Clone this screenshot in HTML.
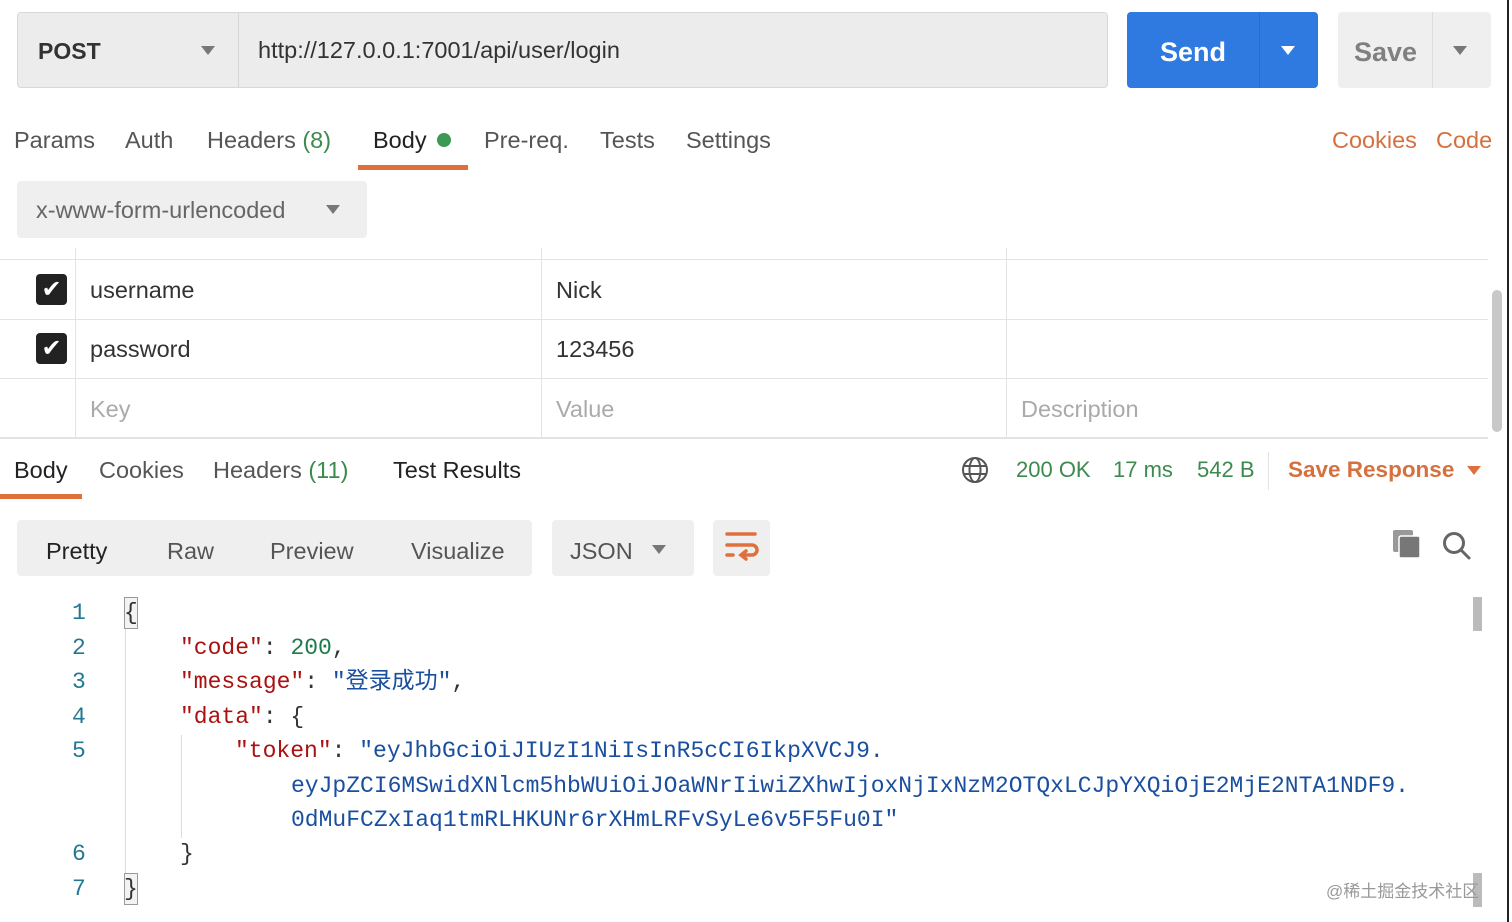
<!DOCTYPE html>
<html><head><meta charset="utf-8"><style>
*{margin:0;padding:0;box-sizing:border-box}
body{width:1512px;height:922px;background:#fff;position:relative;overflow:hidden;font-family:"Liberation Sans","Noto Sans CJK SC",sans-serif;color:#333}
.a{position:absolute;white-space:nowrap}
.t{font-size:23.5px;color:#555;line-height:28px}
.mono{font-family:"Liberation Mono","Noto Sans CJK SC",monospace;font-size:23px;line-height:28px;height:28px;position:absolute;white-space:pre}
.mono span{line-height:28px}
.k{color:#a11}.s{color:#1a4fa0}.n{color:#1f7a4a}
.ln{color:#237893;font-family:"Liberation Mono",monospace;font-size:23px;line-height:28px;position:absolute}
.tri{position:absolute;width:0;height:0;border-left:7px solid transparent;border-right:7px solid transparent;border-top:9px solid #777}
</style></head><body>
<div class="a" style="left:17px;top:12px;width:1091px;height:76px;background:#ececec;border:1px solid #d8d8d8;border-radius:4px"></div>
<div class="a" style="left:238px;top:13px;width:1px;height:74px;background:#d6d6d6"></div>
<div class="a" style="left:38px;top:37px;font-size:23px;line-height:28px;font-weight:bold;color:#333">POST</div>
<div class="tri" style="left:201px;top:46px"></div>
<div class="a" style="left:258px;top:36px;font-size:23.5px;line-height:28px;color:#333">http://127.0.0.1:7001/api/user/login</div>
<div class="a" style="left:1127px;top:12px;width:191px;height:76px;background:#2f7ae0;border-radius:4px"></div>
<div class="a" style="left:1259px;top:12px;width:1px;height:76px;background:#2a6dca"></div>
<div class="a" style="left:1160px;top:36px;font-size:27px;line-height:32px;font-weight:bold;color:#fff">Send</div>
<div class="tri" style="left:1281px;top:46px;border-top-color:#fff"></div>
<div class="a" style="left:1338px;top:12px;width:153px;height:76px;background:#efefef;border-radius:4px"></div>
<div class="a" style="left:1432px;top:12px;width:1px;height:76px;background:#ddd"></div>
<div class="a" style="left:1354px;top:36px;font-size:27px;line-height:32px;font-weight:bold;color:#808080">Save</div>
<div class="tri" style="left:1453px;top:46px"></div>
<div class="a" style="left:1507px;top:0;width:5px;height:922px;background:#fff;border-left:2px solid #222"></div>
<div class="a t" style="left:14px;top:126px">Params</div>
<div class="a t" style="left:125px;top:126px">Auth</div>
<div class="a t" style="left:207px;top:126px">Headers <span style="color:#3d8a4e">(8)</span></div>
<div class="a t" style="left:373px;top:126px;color:#222">Body</div>
<div class="a" style="left:437px;top:133px;width:14px;height:14px;border-radius:50%;background:#3d9a55"></div>
<div class="a" style="left:358px;top:165px;width:110px;height:5px;background:#e0703b"></div>
<div class="a t" style="left:484px;top:126px">Pre-req.</div>
<div class="a t" style="left:600px;top:126px">Tests</div>
<div class="a t" style="left:686px;top:126px">Settings</div>
<div class="a t" style="left:1332px;top:126px;color:#d5703f">Cookies</div>
<div class="a t" style="left:1436px;top:126px;color:#d5703f">Code</div>
<div class="a" style="left:17px;top:181px;width:350px;height:57px;background:#efefef;border-radius:4px"></div>
<div class="a t" style="left:36px;top:196px;color:#666">x-www-form-urlencoded</div>
<div class="tri" style="left:326px;top:205px"></div>
<div class="a" style="left:0;top:259px;width:1488px;height:1px;background:#e3e3e3"></div>
<div class="a" style="left:0;top:319px;width:1488px;height:1px;background:#e3e3e3"></div>
<div class="a" style="left:0;top:378px;width:1488px;height:1px;background:#e3e3e3"></div>
<div class="a" style="left:0;top:437px;width:1488px;height:2px;background:#e3e3e3"></div>
<div class="a" style="left:75px;top:248px;width:1px;height:190px;background:#e3e3e3"></div>
<div class="a" style="left:541px;top:248px;width:1px;height:190px;background:#e3e3e3"></div>
<div class="a" style="left:1006px;top:248px;width:1px;height:190px;background:#e3e3e3"></div>
<div class="a" style="left:1492px;top:290px;width:10px;height:142px;background:#c8c8c8;border-radius:5px"></div>
<div class="a" style="left:36px;top:274px;width:31px;height:31px;background:#222;border-radius:4px;color:#fff;font-size:24px;line-height:31px;text-align:center">✔</div>
<div class="a" style="left:36px;top:333px;width:31px;height:31px;background:#222;border-radius:4px;color:#fff;font-size:24px;line-height:31px;text-align:center">✔</div>
<div class="a t" style="left:90px;top:276px;color:#333">username</div>
<div class="a t" style="left:556px;top:276px;color:#333">Nick</div>
<div class="a t" style="left:90px;top:335px;color:#333">password</div>
<div class="a t" style="left:556px;top:335px;color:#333">123456</div>
<div class="a t" style="left:90px;top:395px;color:#aaa">Key</div>
<div class="a t" style="left:556px;top:395px;color:#aaa">Value</div>
<div class="a t" style="left:1021px;top:395px;color:#aaa">Description</div>
<div class="a t" style="left:14px;top:456px;color:#222">Body</div>
<div class="a" style="left:0;top:494px;width:82px;height:5px;background:#e0703b"></div>
<div class="a t" style="left:99px;top:456px">Cookies</div>
<div class="a t" style="left:213px;top:456px">Headers <span style="color:#3d8a4e">(11)</span></div>
<div class="a t" style="left:393px;top:456px;color:#222">Test Results</div>
<svg class="a" style="left:960px;top:455px" width="30" height="30" viewBox="0 0 30 30" fill="none" stroke="#555" stroke-width="2"><circle cx="15" cy="15" r="12"/><ellipse cx="15" cy="15" rx="5.5" ry="12"/><path d="M3.5 11h23M3.5 19h23"/></svg>
<div class="a t" style="left:1016px;top:456px;color:#3d8a4e;font-size:22px">200 OK</div>
<div class="a t" style="left:1113px;top:456px;color:#3d8a4e;font-size:22px">17 ms</div>
<div class="a t" style="left:1197px;top:456px;color:#3d8a4e;font-size:22px">542 B</div>
<div class="a" style="left:1268px;top:452px;width:1px;height:38px;background:#e3e3e3"></div>
<div class="a" style="left:1288px;top:456px;font-size:22.5px;line-height:28px;font-weight:bold;color:#d5703f">Save Response</div>
<div class="tri" style="left:1467px;top:466px;border-top-color:#e0703b"></div>
<div class="a" style="left:17px;top:520px;width:515px;height:56px;background:#efefef;border-radius:4px"></div>
<div class="a t" style="left:46px;top:537px;color:#222">Pretty</div>
<div class="a t" style="left:167px;top:537px">Raw</div>
<div class="a t" style="left:270px;top:537px">Preview</div>
<div class="a t" style="left:411px;top:537px">Visualize</div>
<div class="a" style="left:552px;top:520px;width:142px;height:56px;background:#efefef;border-radius:4px"></div>
<div class="a t" style="left:570px;top:537px">JSON</div>
<div class="tri" style="left:652px;top:545px"></div>
<div class="a" style="left:713px;top:520px;width:57px;height:56px;background:#efefef;border-radius:4px"></div>
<svg class="a" style="left:724px;top:530px" width="36" height="34" viewBox="0 0 36 34" fill="none" stroke="#e0703b" stroke-width="3.5" stroke-linecap="round"><path d="M3 4h28M3 15h25a5 5 0 0 1 0 10h-10M22 21l-5 4 5 4M3 25h6"/></svg>
<svg class="a" style="left:1392px;top:529px" width="30" height="30" viewBox="0 0 30 30"><rect x="1" y="1" width="20" height="22" rx="2" fill="#999"/><rect x="7" y="7" width="21" height="22" rx="2" fill="#777" stroke="#fff" stroke-width="1.5"/></svg>
<svg class="a" style="left:1441px;top:530px" width="32" height="32" viewBox="0 0 32 32" fill="none" stroke="#666" stroke-width="3"><circle cx="13" cy="13" r="9.5"/><path d="M20 20l8 8" stroke-linecap="round"/></svg>
<div class="a" style="left:1473px;top:597px;width:9px;height:34px;background:#bbb"></div>
<div class="a" style="left:1473px;top:873px;width:9px;height:34px;background:#bbb"></div>
<div class="a" style="left:125px;top:625px;width:1px;height:255px;background:#ddd"></div>
<div class="a" style="left:181px;top:735px;width:1px;height:103px;background:#ddd"></div>
<div class="a" style="left:124px;top:597px;width:14px;height:32px;border:1px solid #999;background:#f3f3f3"></div>
<div class="a" style="left:124px;top:873px;width:14px;height:32px;border:1px solid #999;background:#f3f3f3"></div>
<div class="ln" style="left:72px;top:599px">1</div>
<div class="ln" style="left:72px;top:634px">2</div>
<div class="ln" style="left:72px;top:668px">3</div>
<div class="ln" style="left:72px;top:703px">4</div>
<div class="ln" style="left:72px;top:737px">5</div>
<div class="ln" style="left:72px;top:840px">6</div>
<div class="ln" style="left:72px;top:875px">7</div>
<div class="mono" style="left:124px;top:599px">{</div>
<div class="mono" style="left:180px;top:634px"><span class="k">"code"</span>: <span class="n">200</span>,</div>
<div class="mono" style="left:180px;top:668px"><span class="k">"message"</span>: <span class="s">"登录成功"</span>,</div>
<div class="mono" style="left:180px;top:703px"><span class="k">"data"</span>: {</div>
<div class="mono" style="left:235px;top:737px"><span class="k">"token"</span>: <span class="s">"eyJhbGciOiJIUzI1NiIsInR5cCI6IkpXVCJ9.</span></div>
<div class="mono s" style="left:291px;top:772px">eyJpZCI6MSwidXNlcm5hbWUiOiJOaWNrIiwiZXhwIjoxNjIxNzM2OTQxLCJpYXQiOjE2MjE2NTA1NDF9.</div>
<div class="mono s" style="left:291px;top:806px">0dMuFCZxIaq1tmRLHKUNr6rXHmLRFvSyLe6v5F5Fu0I"</div>
<div class="mono" style="left:180px;top:840px">}</div>
<div class="mono" style="left:124px;top:875px">}</div>
<div class="a" style="left:1326px;top:877px;font-size:17px;color:#999">@稀土掘金技术社区</div>
</body></html>
